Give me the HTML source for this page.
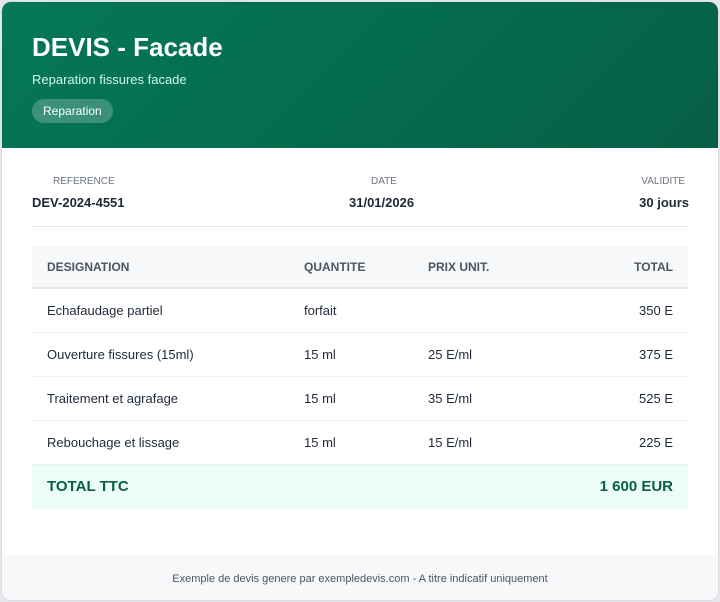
<!DOCTYPE html>
<html><head><meta charset="utf-8"><style>
*{margin:0;padding:0;box-sizing:border-box}
body{width:720px;height:602px;background:#e5e7eb;font-family:"Liberation Sans",sans-serif;color:#1f2937}
.card{position:absolute;left:1px;top:1px;width:718px;height:600px;background:#fff;border:1px solid #d9dce1;border-radius:10px;overflow:hidden}
.hd{position:absolute;left:0;top:0;width:716px;height:146px;background:linear-gradient(135deg,#047857,#065f46)}
.hd h1{position:absolute;left:30px;top:30px;font-size:26px;font-weight:bold;color:#fff}
.hd .sub{position:absolute;left:30px;top:70px;font-size:13px;color:#d1fae5}
.hd .tag{position:absolute;left:30px;top:97px;height:24px;padding:0 11px;line-height:24px;border-radius:12px;background:rgba(255,255,255,.22);color:#fff;font-size:12px}
.lbl{position:absolute;top:174px;font-size:10px;color:#6b7280;text-transform:uppercase}
.val{position:absolute;top:193px;font-size:13px;font-weight:bold;color:#1f2937}
.div{position:absolute;left:30px;top:224px;width:656px;height:1px;background:#e5e7eb}
table{position:absolute;left:30px;top:245px;width:656px;border-collapse:collapse;font-size:13px}
th{height:41px;background:#f7f8fa;font-size:12px;color:#4b5563;text-align:left;font-weight:bold;border-bottom:2px solid #e5e7eb}
td{height:44px;border-bottom:1px solid #eef0f2;color:#1f2937}
th:first-child,td:first-child{padding-left:15px}
th:last-child,td:last-child{text-align:right;padding-right:15px}
tr.tot td{background:#ecfdf5;color:#065f46;font-weight:bold;font-size:15px;border:none;height:45px}
.ft{position:absolute;left:0;top:553px;width:716px;height:48px;background:#f7f8fa;text-align:center;line-height:48px;font-size:11px;color:#4b5563}
</style></head><body>
<div class="card">
<div class="hd"><h1>DEVIS - Facade</h1><div class="sub">Reparation fissures facade</div><div class="tag">Reparation</div></div>
<div class="lbl" style="left:51px">Reference</div><div class="val" style="left:30px">DEV-2024-4551</div>
<div class="lbl" style="left:369px">Date</div><div class="val" style="left:347px">31/01/2026</div>
<div class="lbl" style="right:33px">Validite</div><div class="val" style="right:29px">30 jours</div>
<div class="div"></div>
<table>
<tr><th style="width:272px">DESIGNATION</th><th style="width:124px">QUANTITE</th><th>PRIX UNIT.</th><th>TOTAL</th></tr>
<tr><td>Echafaudage partiel</td><td>forfait</td><td></td><td>350 E</td></tr>
<tr><td>Ouverture fissures (15ml)</td><td>15 ml</td><td>25 E/ml</td><td>375 E</td></tr>
<tr><td>Traitement et agrafage</td><td>15 ml</td><td>35 E/ml</td><td>525 E</td></tr>
<tr><td>Rebouchage et lissage</td><td>15 ml</td><td>15 E/ml</td><td>225 E</td></tr>
<tr class="tot"><td>TOTAL TTC</td><td></td><td></td><td>1 600 EUR</td></tr>
</table>
<div class="ft">Exemple de devis genere par exempledevis.com - A titre indicatif uniquement</div>
</div>
</body></html>
